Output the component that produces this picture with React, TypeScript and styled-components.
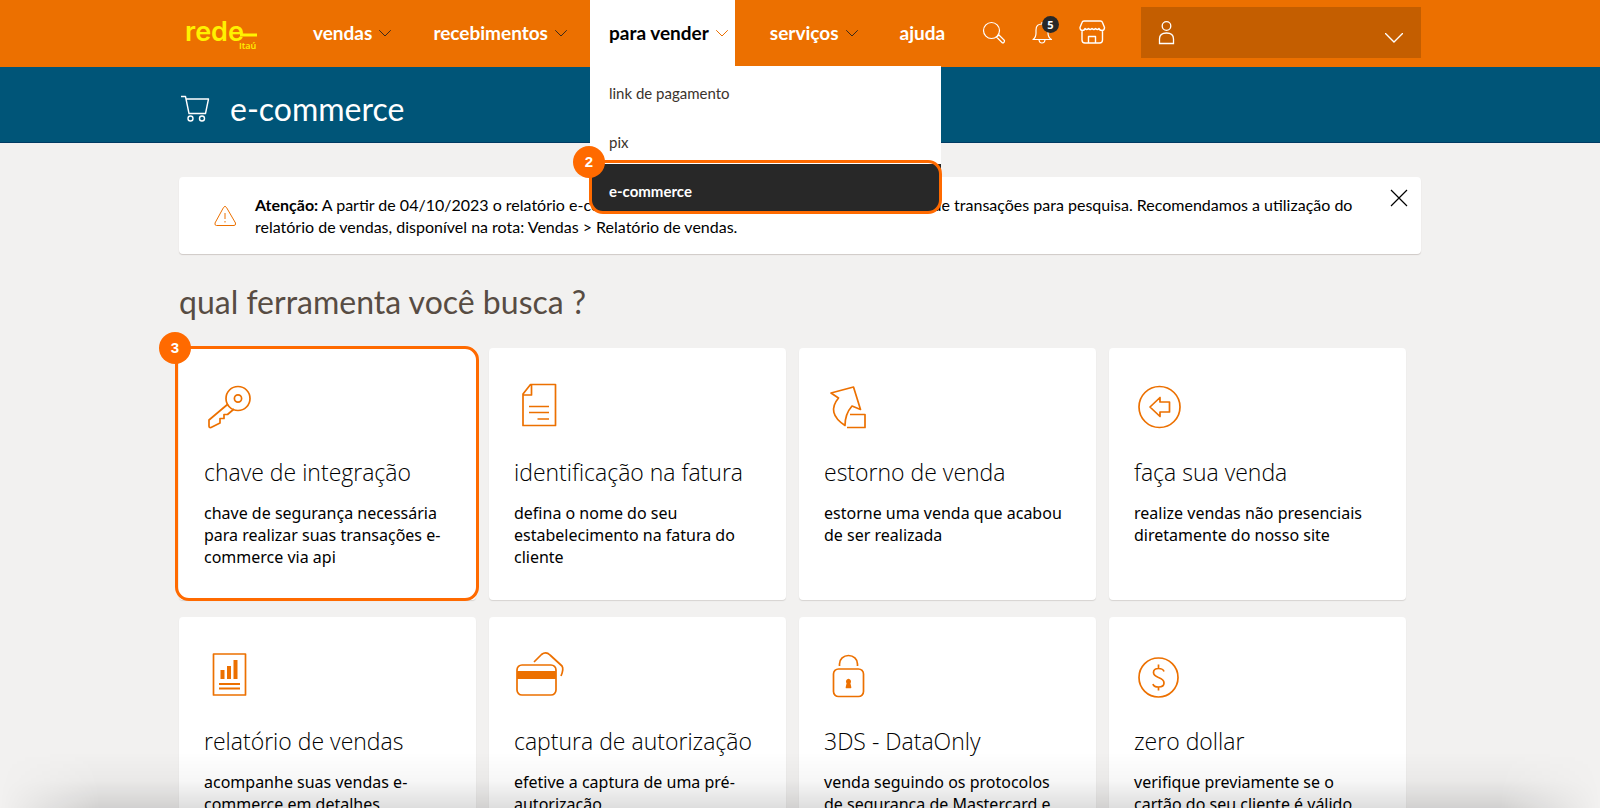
import React from 'react';
import styled, { createGlobalStyle, css } from 'styled-components';

const color = {
  header: '#ec7000',
  account: '#c45e00',
  band: '#005578',
  page: '#f2f1f0',
  ink: '#000000',
  heading: '#574c43',
  dark: '#282828',
  highlight: '#ff6a00',
  logo: '#fff200',
};

const Global = createGlobalStyle`
  *, *::before, *::after { box-sizing: border-box; }
  body {
    margin: 0;
    background: ${color.page};
    color: ${color.ink};
    font-family: Lato, "Open Sans", sans-serif;
  }
  h1, h2, h3, p, ul { margin: 0; padding: 0; }
  ul { list-style: none; }
  button { border: 0; padding: 0; background: none; font: inherit; color: inherit; cursor: pointer; }
  a { color: inherit; text-decoration: none; }
  svg { display: block; }
`;

const Page = styled.div`
  display: flex;
  flex-direction: column;
  height: 100vh;
  overflow: hidden;
`;

const Container = styled.div`
  width: 100%;
  max-width: 1242px;
  margin: 0 auto;
`;

const Header = styled.header`
  background: ${color.header};
  flex: none;
`;

const HeaderRow = styled(Container)`
  display: flex;
  align-items: flex-start;
  height: 67px;
`;

const Logo = styled.a`
  flex: none;
  padding: 16px 0 0 6px;
  width: 115px;
`;

const Nav = styled.nav`
  flex: none;
`;

const NavList = styled.ul`
  display: flex;
  gap: 16px;
`;

const NavItem = styled.li`
  position: relative;
`;

const NavButton = styled.button<{ $open?: boolean }>`
  display: flex;
  align-items: center;
  gap: 7px;
  height: 66px;
  padding: 0 7px 0 19px;
  font-size: 19px;
  line-height: 24px;
  font-weight: 700;
  color: ${p => (p.$open ? color.ink : '#fff')};
  background: ${p => (p.$open ? '#fff' : 'transparent')};
  svg { color: ${p => (p.$open ? color.header : '#3c2a1a')}; }
`;

const Menu = styled.ul`
  position: absolute;
  z-index: 5;
  top: 100%;
  left: 0;
  width: 351px;
  background: #fff;
  border-radius: 0 0 14px 14px;
`;

const MenuItem = styled.li`
  position: relative;
`;

const MenuLink = styled.a<{ $active?: boolean }>`
  display: flex;
  align-items: center;
  height: 49px;
  padding: 4px 19px 0;
  font-size: 15px;
  color: #3b332d;
  ${p => p.$active && css`
    font-weight: 700;
    color: #fff;
    background: ${color.dark};
    border-radius: 0 0 14px 14px;
  `}
`;

const Ring = styled.span<{ $spread: string }>`
  position: absolute;
  inset: ${p => p.$spread};
  border: 3px solid ${color.highlight};
  border-radius: 14px;
  pointer-events: none;
`;

const Step = styled.span`
  position: absolute;
  top: -17px;
  left: -19px;
  width: 32px;
  height: 32px;
  border-radius: 50%;
  background: ${color.highlight};
  color: #fff;
  font: 700 15px/32px "Liberation Sans", sans-serif;
  text-align: center;
`;

const Tools = styled.div`
  display: flex;
  align-items: flex-start;
  gap: 26px;
  margin-left: auto;
  color: #fff;
`;

const ToolButton = styled.button`
  position: relative;
  padding-top: 20px;
`;

const Count = styled.span`
  position: absolute;
  top: 16px;
  left: 10px;
  width: 17px;
  height: 17px;
  border-radius: 50%;
  background: ${color.dark};
  font: 700 11px/17px "Noto Sans", sans-serif;
  text-align: center;
`;

const Account = styled.button`
  display: flex;
  justify-content: space-between;
  align-items: center;
  width: 280px;
  height: 51px;
  margin: 7px 0 0 9px;
  padding: 0 18px 0 17px;
  background: ${color.account};
`;

const AccountArrow = styled.span`
  padding-top: 11px;
`;

const Band = styled.div`
  flex: none;
  background: ${color.band};
  border-bottom: 1px solid #003a63;
  color: #fff;
`;

const BandRow = styled(Container)`
  display: flex;
  align-items: center;
  gap: 20px;
  height: 75px;
  padding: 8px 0 0 2px;
`;

const BandTitle = styled.h1`
  font-size: 32px;
  line-height: 40px;
  font-weight: 400;
`;

const Main = styled.main`
  flex: 1;
  min-height: 0;
  padding-top: 34px;
`;

const Alert = styled.section`
  display: flex;
  align-items: flex-start;
  padding: 17px 13px 16px 35px;
  background: #fff;
  border-radius: 4px;
  box-shadow: 0 1px 1px #cfc9c6;
`;

const AlertIcon = styled.span`
  flex: none;
  width: 41px;
  padding-top: 11px;
`;

const AlertText = styled.p`
  flex: 1;
  padding-right: 31px;
  font-size: 16px;
  line-height: 22px;
`;

const Close = styled.button`
  flex: none;
  margin-top: -5px;
`;

const Heading = styled.h2`
  margin: 28px 0 26px;
  font-size: 32px;
  line-height: 40px;
  font-weight: 400;
  color: ${color.heading};
`;

const Grid = styled.ul`
  display: grid;
  grid-template-columns: repeat(4, 1fr);
  gap: 17px 13px;
  padding-right: 15px;
`;

const Card = styled.li`
  position: relative;
`;

const CardLink = styled.a`
  display: block;
  height: 252px;
  padding: 30px 25px;
  background: #fff;
  border-radius: 4px;
  box-shadow: 0 1px 1px #d6d3d1;
`;

const CardTitle = styled.h3`
  margin: 22px 0 14px;
  font-family: "Open Sans", sans-serif;
  font-size: 23px;
  line-height: 32px;
  font-weight: 300;
`;

const CardText = styled.p`
  font-family: "Noto Sans", sans-serif;
  font-size: 16px;
  line-height: 22px;
`;

const Shade = styled.div`
  position: fixed;
  inset: auto 0 0;
  height: 56px;
  pointer-events: none;
  background: linear-gradient(transparent, rgba(0, 0, 0, 0.03) 50%, rgba(0, 0, 0, 0.13));
  mask-image: linear-gradient(90deg, transparent, #000 100px, #000 calc(100% - 100px), transparent);
`;

const Chevron = ({ w = 12, h = 7, sw = 1 }: { w?: number; h?: number; sw?: number }) => (
  <svg width={w} height={h} viewBox={`0 0 ${w} ${h}`} fill="none" stroke="currentColor" strokeWidth={sw} aria-hidden="true">
    <path d={`M.5 .5 L${w / 2} ${h - 1} L${w - 0.5} .5`} strokeLinecap="round" />
  </svg>
);

const RedeLogo = () => (
  <svg width="74" height="36" viewBox="0 0 74 36" fill={color.logo} role="img" aria-label="rede Itaú">
    <text x="0" y="25" fontFamily="Inter, sans-serif" fontWeight="600" fontSize="27">rede</text>
    <path d="M55 19H72" stroke={color.logo} strokeWidth="3" />
    <text x="54" y="33" fontFamily="Open Sans, sans-serif" fontWeight="600" fontSize="9">Itaú</text>
  </svg>
);

const CardIcon = ({ children }: { children: React.ReactNode }) => (
  <svg width="52" height="56" viewBox="0 0 52 56" fill="none" stroke={color.header} strokeWidth="1.7" strokeLinejoin="round" aria-hidden="true">
    {children}
  </svg>
);

const tools = [
  {
    title: 'chave de integração',
    text: 'chave de segurança necessária para realizar suas transações e-commerce via api',
    marked: true,
    icon: (
      <>
        <circle cx="34" cy="20.500" r="12" />
        <circle cx="34" cy="20.500" r="3.600" />
        <path d="M24 26 5 42V48Q5 50 7 49.500L16 45V40.500H20V36.500H23.500L30 31" />
      </>
    ),
  },
  {
    title: 'identificação na fatura',
    text: 'defina o nome do seu estabelecimento na fatura do cliente',
    icon: <path d="M16.500 6.500H41.500V47.500H9V16ZM17.500 7V17H9.500M15 28.500H35M15 34.500H35M23.500 41H35" />,
  },
  {
    title: 'estorno de venda',
    text: 'estorne uma venda que acabou de ser realizada',
    icon: (
      <>
        <path d="M7 15 29.500 9 36.500 31.500 28 28Q21 36 21 47.500Q2 35 14.500 20Z" />
        <path d="M26 36.500H41V49.500H23" />
      </>
    ),
  },
  {
    title: 'faça sua venda',
    text: 'realize vendas não presenciais diretamente do nosso site',
    icon: (
      <>
        <circle cx="25.500" cy="29" r="20.500" />
        <path d="M16 29 26 19.500V24H35.500V34H26V38.500Z" />
      </>
    ),
  },
  {
    title: 'relatório de vendas',
    text: 'acompanhe suas vendas e-commerce em detalhes',
    icon: (
      <>
        <rect x="9.500" y="7" width="32" height="41" />
        <path d="M18.500 23V32M25 19V32M31.500 13V32" strokeWidth="4" />
        <path d="M15 37H36M15 41.500H36" strokeWidth="2" />
      </>
    ),
  },
  {
    title: 'captura de autorização',
    text: 'efetive a captura de uma pré-autorização',
    icon: (
      <>
        <rect x="3" y="18" width="39" height="30" rx="5" />
        <path d="M3 28H42" strokeWidth="8" />
        <path d="M20 15 27.500 7.500Q32 4 36 8L48 19Q50 22 47 29" />
      </>
    ),
  },
  {
    title: '3DS - DataOnly',
    text: 'venda seguindo os protocolos de segurança de Mastercard e',
    icon: (
      <>
        <rect x="9.500" y="22" width="30" height="27.500" rx="5" />
        <path d="M15.500 19V17A9 8.500 0 0 1 33.500 17V19" />
        <path d="M24.500 32.500A2 2 0 0 1 25.500 36L26.500 40.500H22.500L23.500 36A2 2 0 0 1 24.500 32.500Z" fill={color.header} />
      </>
    ),
  },
  {
    title: 'zero dollar',
    text: 'verifique previamente se o cartão do seu cliente é válido',
    icon: (
      <>
        <circle cx="24.500" cy="30.500" r="19.500" />
        <path d="M30 24.500Q29 21.500 24.500 21.500Q19.500 21.500 19.500 25.500Q19.500 28.500 24.500 30.500Q30 32.500 30 36Q30 40 24.500 40Q19.500 40 19 37M24.500 17.500V21.500M24.500 40V43.500" />
      </>
    ),
  },
];

export default function App() {
  return (
    <Page>
      <Global />
      <Header>
        <HeaderRow>
          <Logo href="#"><RedeLogo /></Logo>
          <Nav aria-label="principal">
            <NavList>
              <NavItem><NavButton>vendas<Chevron /></NavButton></NavItem>
              <NavItem><NavButton>recebimentos<Chevron /></NavButton></NavItem>
              <NavItem>
                <NavButton $open aria-expanded="true">para vender<Chevron /></NavButton>
                <Menu>
                  <MenuItem><MenuLink href="#">link de pagamento</MenuLink></MenuItem>
                  <MenuItem><MenuLink href="#">pix</MenuLink></MenuItem>
                  <MenuItem>
                    <MenuLink href="#" $active>e-commerce</MenuLink>
                    <Ring $spread="-4px -1px -1px -1px"><Step>2</Step></Ring>
                  </MenuItem>
                </Menu>
              </NavItem>
              <NavItem><NavButton>serviços<Chevron /></NavButton></NavItem>
              <NavItem><NavButton>ajuda</NavButton></NavItem>
            </NavList>
          </Nav>
          <Tools>
            <ToolButton aria-label="buscar">
              <svg width="24" height="26" viewBox="0 0 24 26" fill="none" stroke="currentColor" strokeWidth="1.200" strokeLinejoin="round">
                <circle cx="9.500" cy="10.500" r="8" />
                <path d="M14.500 17 17 15 22.500 20.500Q22.500 23 20.500 23Z" />
              </svg>
            </ToolButton>
            <ToolButton aria-label="notificações">
              <svg width="21" height="26" viewBox="0 0 21 26" fill="none" stroke="currentColor" strokeWidth="1.200" strokeLinejoin="round">
                <path d="M1 19.500Q4 17.500 4 13V10Q4 4 10 4Q16 4 16 10V13Q16 17.500 19.500 19.500ZM7 20Q7.500 23 10 23Q12.500 23 13 20M10 4V2" />
              </svg>
              <Count>5</Count>
            </ToolButton>
            <ToolButton aria-label="loja">
              <svg width="27" height="26" viewBox="0 0 27 26" fill="none" stroke="currentColor" strokeWidth="1.400" strokeLinejoin="round">
                <path d="M5 1H21.500Q23 1 23.500 2.500L25.500 7.500Q25.500 10.500 23 10.500Q20.500 10.500 20 8.500Q18.500 10.500 16.500 8.500Q15 10.500 13 8.500Q11 10.500 9.500 8.500Q7.500 10.500 6 8.500Q5.500 10.500 3.500 10.500Q1 10.500 1 7.500L3 2.500Q3.500 1 5 1ZM3 10.500V20Q3 23 6 23H20.500Q23.500 23 23.500 20V10.500M9.500 23V16.500H16.500V23" />
              </svg>
            </ToolButton>
            <Account aria-label="conta">
              <svg width="18" height="24" viewBox="0 0 18 24" fill="none" stroke="currentColor" strokeWidth="1.300">
                <circle cx="8.500" cy="5" r="4.300" />
                <path d="M1.500 22.500V18Q1.500 12 8.500 12Q15.500 12 15.500 18V22.500Z" />
              </svg>
              <AccountArrow><Chevron w={18} h={10} sw={1.4} /></AccountArrow>
            </Account>
          </Tools>
        </HeaderRow>
      </Header>
      <Band>
        <BandRow>
          <svg width="29" height="27" viewBox="0 0 29 27" fill="none" stroke="#fff" strokeWidth="1.400" strokeLinejoin="round" aria-hidden="true">
            <path d="M0 1.500H4.500L8 18.500H24.500L27.500 4H5" />
            <circle cx="9.500" cy="23.500" r="2.500" />
            <circle cx="21" cy="23.500" r="2.500" />
          </svg>
          <BandTitle>e-commerce</BandTitle>
        </BandRow>
      </Band>
      <Main>
        <Container>
          <Alert>
            <AlertIcon>
              <svg width="23" height="22" viewBox="0 0 23 22" fill="none" stroke={color.header} strokeLinejoin="round" aria-hidden="true">
                <path d="M9.500 2.500Q11 0 12.500 2.500L21.500 18Q22 20.500 20 20.500H2.500Q.500 20.500 1 18ZM11 8V14M11 16V17.500" />
              </svg>
            </AlertIcon>
            <AlertText>
              <b>Atenção:</b> A partir de 04/10/2023 o relatório e-commerce passa a exibir somente últimos 90 dias de transações para pesquisa. Recomendamos a utilização do relatório de vendas, disponível na rota: Vendas &gt; Relatório de vendas.
            </AlertText>
            <Close aria-label="fechar">
              <svg width="18" height="18" viewBox="0 0 18 18" stroke="#000" strokeWidth="1.200">
                <path d="M1 1 17 17M17 1 1 17" />
              </svg>
            </Close>
          </Alert>
          <Heading>qual ferramenta você busca ?</Heading>
          <Grid>
            {tools.map(t => (
              <Card key={t.title}>
                <CardLink href="#">
                  <CardIcon>{t.icon}</CardIcon>
                  <CardTitle>{t.title}</CardTitle>
                  <CardText>{t.text}</CardText>
                </CardLink>
                {t.marked && <Ring $spread="-2px -3px -1px -4px"><Step>3</Step></Ring>}
              </Card>
            ))}
          </Grid>
        </Container>
      </Main>
      <Shade />
    </Page>
  );
}
